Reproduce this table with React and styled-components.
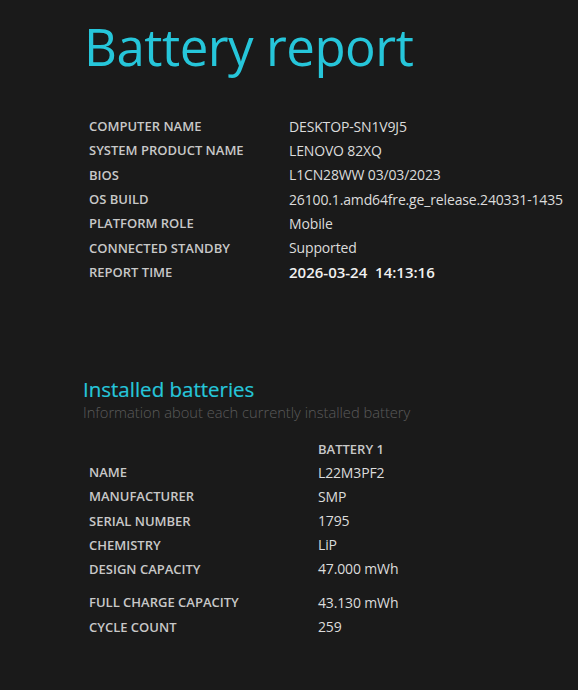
import React from "react";
import styled, { createGlobalStyle } from "styled-components";

const GlobalStyle = createGlobalStyle`
  html, body {
    margin: 0;
    padding: 0;
    background: #1a1a1a;
  }
  body {
    font-family: "Open Sans", "Noto Sans", sans-serif;
  }
`;

const systemInfo = [
  ["COMPUTER NAME", "DESKTOP-SN1V9J5"],
  ["SYSTEM PRODUCT NAME", "LENOVO 82XQ"],
  ["BIOS", "L1CN28WW 03/03/2023"],
  ["OS BUILD", "26100.1.amd64fre.ge_release.240331-1435"],
  ["PLATFORM ROLE", "Mobile"],
  ["CONNECTED STANDBY", "Supported"],
];

const batteryInfo = [
  ["NAME", "L22M3PF2"],
  ["MANUFACTURER", "SMP"],
  ["SERIAL NUMBER", "1795"],
  ["CHEMISTRY", "LiP"],
  ["DESIGN CAPACITY", "47.000 mWh"],
];

const batteryCapacity = [
  ["FULL CHARGE CAPACITY", "43.130 mWh"],
  ["CYCLE COUNT", "259"],
];

const App = () => {
  return (
    <Page>
      <GlobalStyle />
      <Title>Battery report</Title>

      <InfoTable>
        {systemInfo.map(([label, value]) => (
          <Row key={label} $labelWidth={200}>
            <Label>{label}</Label>
            <Value>{value}</Value>
          </Row>
        ))}
        <Row $labelWidth={200}>
          <Label>REPORT TIME</Label>
          <Value $strong>2026-03-24&nbsp;&nbsp;14:13:16</Value>
        </Row>
      </InfoTable>

      <Section>
        <SectionTitle>Installed batteries</SectionTitle>
        <SectionSub>Information about each currently installed battery</SectionSub>

        <BatteryTable>
          <HeadRow $labelWidth={229}>
            <span />
            <ColumnHead>BATTERY 1</ColumnHead>
          </HeadRow>
          {batteryInfo.map(([label, value]) => (
            <Row key={label} $labelWidth={229}>
              <Label>{label}</Label>
              <Value>{value}</Value>
            </Row>
          ))}
          <Group>
            {batteryCapacity.map(([label, value]) => (
              <Row key={label} $labelWidth={229}>
                <Label>{label}</Label>
                <Value>{value}</Value>
              </Row>
            ))}
          </Group>
        </BatteryTable>
      </Section>
    </Page>
  );
};

export default App;

const Page = styled.div`
  min-height: 690px;
  padding: 10px 0 0 83px;
  box-sizing: border-box;
  background: #1a1a1a;
`;

const Title = styled.h1`
  margin: 0 0 0 1px;
  font-weight: 400;
  font-size: 51px;
  line-height: 72px;
  color: #26c6da;
  letter-spacing: -0.5px;
`;

const InfoTable = styled.div`
  margin: 32px 0 0 6px;
  display: flex;
  flex-direction: column;
`;

const Row = styled.div`
  display: grid;
  grid-template-columns: ${(p) => p.$labelWidth}px 1fr;
  height: 24.3px;
  align-items: center;
`;

const HeadRow = styled(Row)``;

const Label = styled.span`
  font-size: 13px;
  font-weight: 600;
  color: #c8c8c8;
  white-space: nowrap;
`;

const Value = styled.span`
  font-size: ${(p) => (p.$strong ? "15px" : "14px")};
  color: ${(p) => (p.$strong ? "#f0f0f0" : "#dcdcdc")};
  font-weight: ${(p) => (p.$strong ? 600 : 400)};
  letter-spacing: ${(p) => (p.$strong ? "0" : "-0.15px")};
  white-space: nowrap;
`;

const Section = styled.div`
  margin-top: 93px;
`;

const SectionTitle = styled.h2`
  margin: 0;
  font-weight: 400;
  font-size: 20.5px;
  line-height: 24px;
  color: #26c6da;
  -webkit-text-stroke: 0.2px #26c6da;
`;

const SectionSub = styled.div`
  font-size: 14.7px;
  font-weight: 300;
  line-height: 22px;
  color: #5a5a5a;
`;

const BatteryTable = styled.div`
  margin: 14px 0 0 6px;
  display: flex;
  flex-direction: column;
  & > ${Row} {
    height: 24.2px;
  }
  & > ${HeadRow} {
    height: 23px;
  }
`;

const ColumnHead = styled.span`
  font-size: 13px;
  font-weight: 600;
  color: #c8c8c8;
`;

const Group = styled.div`
  margin-top: 9px;
  & > ${Row} {
    height: 24.6px;
  }
`;
